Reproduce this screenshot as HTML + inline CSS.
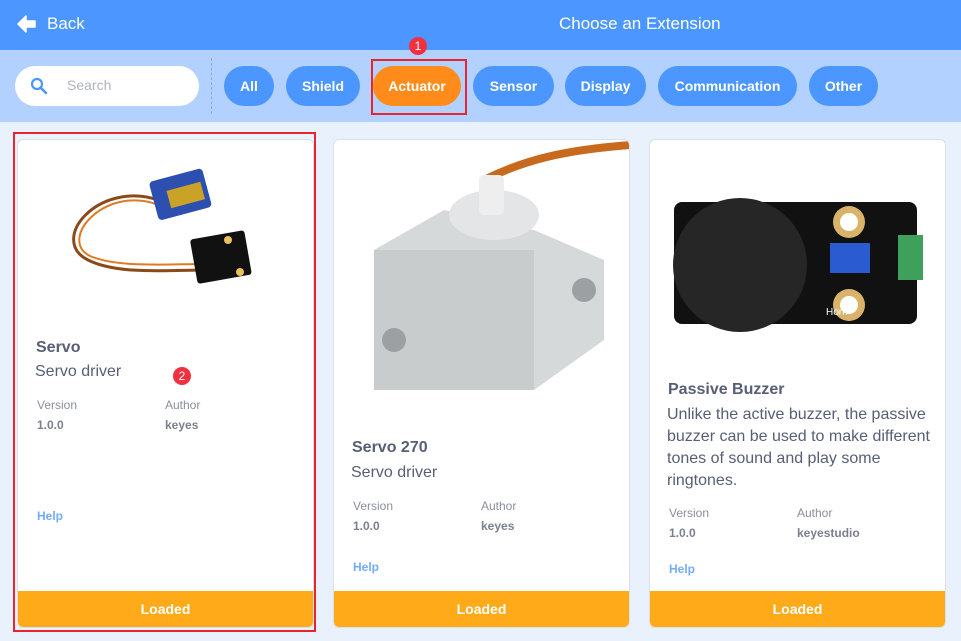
<!DOCTYPE html>
<html><head><style>
*{box-sizing:border-box;margin:0;padding:0}
body{width:961px;height:641px;overflow:hidden;background:#E9F1FC;font-family:"Liberation Sans",sans-serif;position:relative}
.hdr{position:absolute;left:0;top:0;width:961px;height:50px;background:#4C97FF;color:#fff}
.bar{position:absolute;left:0;top:50px;width:961px;height:72px;background:#B3D1FF}
.pill{position:absolute;top:66px;height:40px;border-radius:20px;background:#4C97FF;color:#fff;font-weight:bold;font-size:14px;line-height:40px;text-align:center}
.card{position:absolute;top:139px;width:297px;height:489px;background:#fff;border:1px solid #d9e0ea;border-radius:6px;overflow:hidden}
.load{position:absolute;left:0;bottom:0;width:100%;height:36px;background:#FFAB19;color:#fff;font-weight:bold;font-size:14px;line-height:36px;text-align:center}
.t{position:absolute;font-weight:bold;font-size:16px;color:#575e75}
.d{position:absolute;font-size:16px;color:#575e75;line-height:22px}
.s{position:absolute;font-size:12px;color:#8a8f9c}
.b{position:absolute;font-size:12px;color:#7a808e;font-weight:bold}
.h{position:absolute;font-size:12px;color:#73abff;font-weight:bold}
.badge{position:absolute;width:18px;height:18px;border-radius:9px;background:#f23140;color:#fff;font-size:12px;text-align:center;line-height:18px}
</style></head><body>
<div class="hdr">
<svg style="position:absolute;left:17px;top:15px" width="20" height="18" viewBox="0 0 20 18"><path d="M9 1 L1 9 L9 17 L9 12 L18 12 L18 6 L9 6 Z" fill="#fff" stroke="#fff" stroke-linejoin="round" stroke-width="1.5"/></svg>
<div style="position:absolute;left:47px;top:14px;font-size:17px">Back</div>
<div style="position:absolute;left:559px;top:14px;font-size:17px">Choose an Extension</div>
</div>
<div class="bar"></div>
<div style="position:absolute;left:15px;top:66px;width:184px;height:40px;border-radius:20px;background:#fff"></div>
<svg style="position:absolute;left:30px;top:77px" width="18" height="18" viewBox="0 0 18 18"><circle cx="7" cy="7" r="5" fill="none" stroke="#4C97FF" stroke-width="2.2"/><path d="M11 11 L16 16" stroke="#4C97FF" stroke-width="2.6" stroke-linecap="round"/></svg>
<div style="position:absolute;left:67px;top:77px;font-size:14px;color:#b0b4bf">Search</div>
<div style="position:absolute;left:211px;top:58px;height:56px;border-left:1px dashed #8fa9cf"></div>
<div class="pill" style="left:224px;width:50px">All</div>
<div class="pill" style="left:286px;width:74px">Shield</div>
<div class="pill" style="left:373px;width:88px;background:#FF8C1A">Actuator</div>
<div style="position:absolute;left:371px;top:59px;width:96px;height:56px;border:2px solid #e8242f"></div>
<div class="badge" style="left:409px;top:37px">1</div>
<div class="pill" style="left:473px;width:81px">Sensor</div>
<div class="pill" style="left:565px;width:81px">Display</div>
<div class="pill" style="left:658px;width:139px">Communication</div>
<div class="pill" style="left:809px;width:69px">Other</div>

<div class="card" style="left:17px">
<svg style="position:absolute;left:40px;top:20px" width="200" height="140" viewBox="0 0 200 140">
<path d="M100 40 C40 20 -10 80 30 100 C60 115 110 110 150 110" fill="none" stroke="#8a4a1a" stroke-width="3"/>
<path d="M98 44 C45 26 0 80 32 96 C60 108 110 104 150 104" fill="none" stroke="#e07a20" stroke-width="2"/>
<rect x="95" y="15" width="55" height="40" rx="4" fill="#2d4fb0" transform="rotate(-15 120 35)"/>
<rect x="110" y="28" width="35" height="18" fill="#c9a227" transform="rotate(-15 120 35)"/>
<rect x="135" y="75" width="55" height="45" rx="3" fill="#111" transform="rotate(-10 160 95)"/>
<circle cx="170" cy="80" r="4" fill="#e8c060"/><circle cx="182" cy="112" r="4" fill="#e8c060"/>
</svg>
<div class="t" style="left:18px;top:199px">Servo</div>
<div class="d" style="left:17px;top:221px">Servo driver</div>
<div class="s" style="left:19px;top:258px">Version</div>
<div class="s" style="left:147px;top:258px">Author</div>
<div class="b" style="left:19px;top:278px">1.0.0</div>
<div class="b" style="left:147px;top:278px">keyes</div>
<div class="h" style="left:19px;top:369px">Help</div>
<div class="load">Loaded</div>
</div>
<div style="position:absolute;left:13px;top:132px;width:303px;height:500px;border:2px solid #e8242f"></div>
<div class="badge" style="left:173px;top:367px">2</div>

<div class="card" style="left:333px">
<svg style="position:absolute;left:0;top:0" width="297" height="280" viewBox="0 0 297 280">
<path d="M150 40 C190 20 230 10 297 5" fill="none" stroke="#c86a1e" stroke-width="8"/>
<path d="M40 110 L110 70 L200 90 L270 120 L270 200 L200 250 L40 200 Z" fill="#d6d9da"/>
<rect x="40" y="110" width="160" height="140" fill="#c9cccd"/>
<ellipse cx="160" cy="75" rx="45" ry="25" fill="#e3e5e6"/>
<rect x="145" y="35" width="25" height="40" rx="5" fill="#eeeeee"/>
<circle cx="60" cy="200" r="12" fill="#9da0a2"/><circle cx="250" cy="150" r="12" fill="#9da0a2"/>
</svg>
<div class="t" style="left:18px;top:299px">Servo 270</div>
<div class="d" style="left:17px;top:322px">Servo driver</div>
<div class="s" style="left:19px;top:359px">Version</div>
<div class="s" style="left:147px;top:359px">Author</div>
<div class="b" style="left:19px;top:379px">1.0.0</div>
<div class="b" style="left:147px;top:379px">keyes</div>
<div class="h" style="left:19px;top:420px">Help</div>
<div class="load">Loaded</div>
</div>

<div class="card" style="left:649px">
<svg style="position:absolute;left:0;top:0" width="297" height="200" viewBox="0 0 297 200">
<rect x="24" y="62" width="243" height="122" rx="8" fill="#111"/>
<circle cx="90" cy="125" r="67" fill="#262626"/>
<circle cx="199" cy="82" r="16" fill="#d9b36a"/><circle cx="199" cy="82" r="9" fill="#fff"/>
<circle cx="199" cy="165" r="16" fill="#d9b36a"/><circle cx="199" cy="165" r="9" fill="#fff"/>
<rect x="180" y="103" width="40" height="30" fill="#2a5bd0"/>
<rect x="248" y="95" width="25" height="45" fill="#3ea05a"/>
<text x="176" y="175" font-size="10" fill="#fff" font-family="Liberation Sans">Horn</text>
</svg>
<div class="t" style="left:18px;top:241px">Passive Buzzer</div>
<div class="d" style="left:17px;top:264px;width:275px">Unlike the active buzzer, the passive buzzer can be used to make different tones of sound and play some ringtones.</div>
<div class="s" style="left:19px;top:366px">Version</div>
<div class="s" style="left:147px;top:366px">Author</div>
<div class="b" style="left:19px;top:386px">1.0.0</div>
<div class="b" style="left:147px;top:386px">keyestudio</div>
<div class="h" style="left:19px;top:422px">Help</div>
<div class="load">Loaded</div>
</div>
</body></html>
